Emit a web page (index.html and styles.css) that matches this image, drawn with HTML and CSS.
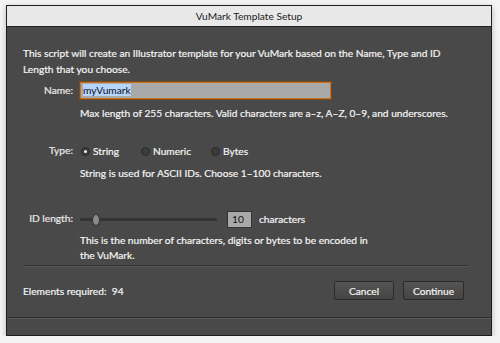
FILE: index.html
```html
<!DOCTYPE html>
<html lang="en">
<head>
  <meta charset="UTF-8">
  <title>VuMark Template Setup</title>
  <link rel="stylesheet" href="styles.css">
</head>
<body>
  <div class="window">
    <div class="titlebar">VuMark Template Setup</div>
    <div class="content">
      <p class="intro">This script will create an Illustrator template for your VuMark based on the Name, Type and ID Length that you choose.</p>

      <div class="row row-name">
        <label class="label" for="name">Name:</label>
        <div class="field">
          <div class="text-input"><span class="selected">myVumark</span></div>
          <p class="hint">Max length of 255 characters. Valid characters are a&ndash;z, A&ndash;Z, 0&ndash;9, and underscores.</p>
        </div>
      </div>

      <div class="row row-type">
        <span class="label">Type:</span>
        <div class="field">
          <div class="radios">
            <span class="radio checked"><i></i>String</span>
            <span class="radio"><i></i>Numeric</span>
            <span class="radio"><i></i>Bytes</span>
          </div>
          <p class="hint">String is used for ASCII IDs. Choose 1&ndash;100 characters.</p>
        </div>
      </div>

      <div class="row row-length">
        <span class="label">ID length:</span>
        <div class="field">
          <div class="slider-line">
            <div class="slider"><span class="thumb"></span></div>
            <span class="num-box">10</span>
            <span class="unit">characters</span>
          </div>
          <p class="hint">This is the number of characters, digits or bytes to be encoded in<br>the VuMark.</p>
        </div>
      </div>

      <div class="divider"></div>

      <div class="footer">
        <span class="count">Elements required:&nbsp;&nbsp;94</span>
        <div class="buttons">
          <button class="btn">Cancel</button>
          <button class="btn">Continue</button>
        </div>
      </div>
    </div>
    <div class="bottom-strip"></div>
  </div>
</body>
</html>
```

FILE: styles.css
```css
body {
  margin: 0;
  background-color: #f4f4f4;
  font-family: Lato, 'Liberation Sans', sans-serif;
  font-size: 10.2px;
  color: #f4f4f4;
}
.window {
  margin: 5px 8px 0 6px;
  width: 484px;
  border: 1px solid #1e1e1e;
  background-color: #494949;
  box-shadow: 0 2px 6px rgba(0, 0, 0, 0.25);
}
.titlebar {
  height: 20px;
  line-height: 20px;
  background-color: #e8e8e8;
  border-bottom: 1px solid #222;
  color: #222;
  text-align: center;
}
.content {
  height: 290px;
  padding: 0 22px 0 16px;
  border-bottom: 1px solid #2c2c2c;
  -webkit-text-stroke: 0.2px;
}
.intro {
  margin: 0;
  padding-top: 18px;
  line-height: 16px;
  width: 425px;
}
.row {
  display: flex;
}
.label {
  width: 50px;
  text-align: right;
  padding-right: 7px;
  color: #eaeaea;
}
.field {
  flex: 1;
}
.hint {
  margin: 0;
  line-height: 15px;
}
.row-name {
  margin-top: 5px;
}
.row-name .label {
  padding-top: 2px;
}
.text-input {
  width: 247px;
  height: 15px;
  border: 1px solid #c8701e;
  box-shadow: 0 0 0 1px #7a4a20;
  background-color: #a9a9a9;
  padding: 0 0 0 2px;
  line-height: 15px;
  color: #111;
  -webkit-text-stroke: 0;
}
.selected {
  background-color: #b5d5ff;
  color: #111;
}
.row-name .hint {
  margin-top: 7px;
}
.row-type {
  margin-top: 23px;
}
.radios {
  display: flex;
  height: 14px;
  line-height: 14px;
}
.radio {
  display: flex;
  align-items: center;
}
.radio:nth-child(1) {
  width: 60px;
}
.radio:nth-child(2) {
  width: 70px;
}
.radio i {
  width: 7px;
  height: 7px;
  border-radius: 50%;
  background-color: #3c3c3c;
  border: 1px solid #2a2a2a;
  margin: 0 3px 0 1px;
  position: relative;
}
.radio.checked i::after {
  content: '';
  position: absolute;
  left: 2px;
  top: 2px;
  width: 3px;
  height: 3px;
  border-radius: 50%;
  background-color: #eee;
}
.row-type .hint {
  margin-top: 8px;
}
.row-length {
  margin-top: 29px;
}
.row-length .label {
  padding-top: 2px;
}
.slider-line {
  display: flex;
  align-items: center;
  height: 18px;
}
.slider {
  position: relative;
  width: 137px;
  height: 3px;
  background-color: #333;
  border-radius: 2px;
  margin-right: 10px;
}
.thumb {
  position: absolute;
  left: 12px;
  top: -4px;
  width: 6px;
  height: 10px;
  border-radius: 50%;
  background-color: #8a8a8a;
  border: 1px solid #333;
}
.num-box {
  width: 19px;
  height: 15px;
  line-height: 15px;
  padding-left: 4px;
  background-color: #a9a9a9;
  border: 1px solid #333;
  color: #111;
  margin-right: 7px;
  -webkit-text-stroke: 0;
}
.row-length .hint {
  margin-top: 5px;
}
.divider {
  margin: 2px 0 0 0;
  border-top: 1px solid #333;
  border-bottom: 1px solid #555;
}
.footer {
  display: flex;
  justify-content: space-between;
  align-items: center;
  margin: 14px 5px 0 0;
}
.buttons {
  display: flex;
  gap: 9px;
}
.btn {
  font-family: inherit;
  font-size: 10.2px;
  color: #f4f4f4;
  -webkit-text-stroke: 0.2px;
  background: linear-gradient(#555, #444);
  border: 1px solid #2a2a2a;
  border-radius: 2px;
  height: 19px;
  padding: 0;
  width: 60px;
}
.btn:last-child {
  width: 61px;
}
.bottom-strip {
  height: 16px;
  border-top: 1px solid #5a5a5a;
}
```
